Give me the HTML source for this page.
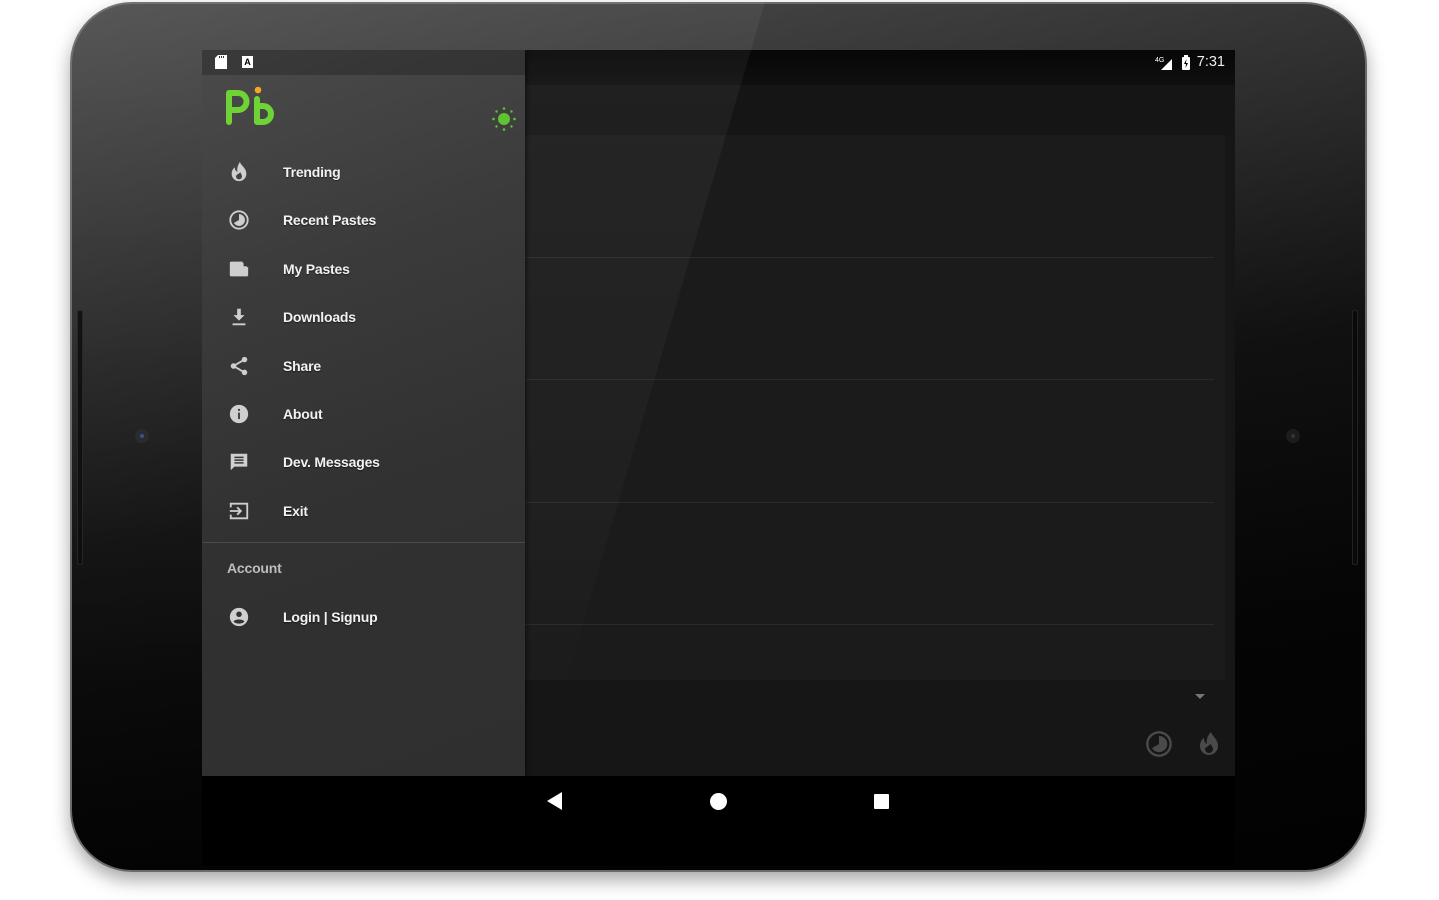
<!DOCTYPE html>
<html><head><meta charset="utf-8"><style>
*{margin:0;padding:0;box-sizing:border-box}
body{width:1439px;height:900px;background:#fff;position:relative;overflow:hidden;font-family:"Liberation Sans",Roboto,sans-serif}
.dev{position:absolute;left:70px;top:2px;width:1297px;height:870px;border-radius:62px;background:linear-gradient(170deg,#4e4e4e 0%,#303030 25%,#111 50%,#050505 75%,#020202 100%);border:2px solid #6a6a6a;box-shadow:0 8px 18px rgba(0,0,0,.35)}
.refl{position:absolute;left:70px;top:2px;width:1297px;height:870px;border-radius:62px;background:linear-gradient(rgba(255,255,255,.05),rgba(255,255,255,.02) 60%,rgba(255,255,255,0) 80%);clip-path:polygon(0 0,695px 0,440px 870px,0 870px);pointer-events:none;z-index:5}
.speaker{position:absolute;width:6px;height:255px;top:310px;background:#0a0a0a;border:1px solid #222;border-radius:2px}
.cam{position:absolute;width:14px;height:14px;border-radius:50%;background:#262626}
.cam i{position:absolute;left:5px;top:5px;width:4px;height:4px;border-radius:50%;background:#3a4a8a}
.screen{position:absolute;left:202px;top:50px;width:1033px;height:816px;background:#000;overflow:hidden}
.main{position:absolute;left:323px;top:0;width:710px;height:726px;background:#161616}
.msb{position:absolute;left:0;top:0;width:710px;height:35px;background:linear-gradient(#070707,#0f0f0f)}
.tb{position:absolute;left:0;top:35px;width:710px;height:50px;background:#151515}
.card{position:absolute;left:0;top:85px;width:700px;height:545px;background:#1b1b1b;border-radius:2px}
.card hr{position:absolute;left:0;width:689px;border:0;border-top:1px solid #2a2a2a}
.drawer{position:absolute;left:0;top:0;width:323px;height:726px;background:linear-gradient(160deg,#4b4b4b 0%,#3b3b3b 30%,#313131 60%,#2f2f2f 100%);box-shadow:2px 0 4px rgba(0,0,0,.4);z-index:6}
.dsb{height:25px;background:rgba(0,0,0,.22)}
.item{position:absolute;left:0;height:48px;width:323px;display:flex;align-items:center}
.item svg{position:absolute;left:26px;width:22px;height:22px}
.item span{position:absolute;left:81px;color:#f2f2f2;font-size:14px;font-weight:bold;letter-spacing:-0.2px;text-shadow:0 1px 1px rgba(0,0,0,.5)}
.nav{position:absolute;left:0;top:726px;width:1033px;height:90px;background:#000;z-index:7}
</style></head><body>
<div class="dev"></div>
<div class="speaker" style="left:77px"></div>
<div class="speaker" style="left:1352px"></div>
<div class="cam" style="left:135px;top:429px"><i></i></div>
<div class="cam" style="left:1286px;top:429px;background:#1c1c1c"><i style="background:#333"></i></div>
<div class="refl"></div>
<div class="screen">
 <div class="main">
  <div class="msb"></div>
  <div style="position:absolute;right:10px;top:4px;color:#eee;font-size:14.5px">7:31</div>
  <svg style="position:absolute;left:630px;top:5px" width="20" height="16"><text x="0" y="7" font-size="7" fill="#fff" font-family="Liberation Sans">4G</text><polygon points="6,15 17,4 17,15" fill="#fff"/></svg>
  <svg style="position:absolute;left:656px;top:5px" width="10" height="16"><rect x="1" y="2" width="8" height="13" rx="1" fill="#fff"/><rect x="3" y="0" width="4" height="2" fill="#fff"/><path d="M5.5 4 L3 9 H5 L4.5 13 L7 8 H5 Z" fill="#000"/></svg>
  <div class="tb"></div>
  <div class="card"><hr style="top:122px"><hr style="top:244px"><hr style="top:367px"><hr style="top:489px"></div>
  <svg style="position:absolute;left:670px;top:644px" width="10" height="6"><polygon points="0,0 10,0 5,5" fill="#777"/></svg>
  <svg style="position:absolute;left:620px;top:680px" width="28" height="28" viewBox="0 0 24 24"><circle cx="12" cy="12" r="10" fill="none" stroke="#4a4a4a" stroke-width="2"/><path d="M12 5a7 7 0 1 1-6 10.5L12 12Z" fill="#4a4a4a"/></svg>
  <svg style="position:absolute;left:672px;top:680px" width="24" height="28" viewBox="0 0 24 28"><path d="M14 2c1 4 7 7 7 14a9 9 0 0 1-18 0c0-4 2-7 4-8 0 3 1 5 3 6-1-5 1-9 4-12zm-2 21a4 4 0 0 0 4-4c0-2-2-3-2-5-3 2-6 4-6 5a4 4 0 0 0 4 4z" fill="#4a4a4a"/></svg>
 </div>
 <div class="drawer">
  <div class="dsb"></div>
  <svg style="position:absolute;left:13px;top:5px" width="12" height="14"><path d="M3 0H12V14H0V3Z" fill="#fff"/><rect x="4" y="1" width="1" height="2" fill="#333"/><rect x="6" y="1" width="1" height="2" fill="#333"/><rect x="8" y="1" width="1" height="2" fill="#333"/></svg>
  <div style="position:absolute;left:40px;top:6px;width:11px;height:12px;background:#fff;color:#000;font-size:9px;font-weight:bold;text-align:center;line-height:12px">A</div>
  <svg style="position:absolute;left:22px;top:36px" width="60" height="40" viewBox="0 0 60 40">
   <path d="M5 36V7h9a8.5 8.5 0 0 1 0 17H5" fill="none" stroke="#6fd335" stroke-width="6" stroke-linecap="round" stroke-linejoin="round"/>
   <path d="M33 13v23h6a8 8 0 0 0 0-16h-6" fill="none" stroke="#6fd335" stroke-width="6" stroke-linecap="round" stroke-linejoin="round"/>
   <circle cx="34" cy="4" r="3.3" fill="#f5a623"/>
  </svg>
  <svg style="position:absolute;left:289px;top:56px" width="26" height="26" viewBox="0 0 26 26"><circle cx="13" cy="13" r="6" fill="#5ec431"/><g fill="#5ec431"><circle cx="13" cy="2.5" r="1.3"/><circle cx="13" cy="23.5" r="1.3"/><circle cx="2.5" cy="13" r="1.3"/><circle cx="23.5" cy="13" r="1.3"/><circle cx="5.5" cy="5.5" r="1.2"/><circle cx="20.5" cy="5.5" r="1.2"/><circle cx="5.5" cy="20.5" r="1.2"/><circle cx="20.5" cy="20.5" r="1.2"/></g></svg>
  <div class="item" style="top:98px"><svg viewBox="0 0 24 24"><path d="M13 1c1 4 7 6.5 7 13a8 8 0 0 1-16 0c0-3.5 1.8-6 3.5-7 0 2.5 1 4.3 2.8 5C9.5 8 11 4 13 1zm-1 19a3.3 3.3 0 0 0 3.3-3.3c0-1.7-1.6-2.7-1.6-4.4-2.2 1.6-5 3.2-5 4.4A3.3 3.3 0 0 0 12 20z" fill="#cfcfcf"/></svg><span>Trending</span></div>
  <div class="item" style="top:146px"><svg viewBox="0 0 24 24"><circle cx="12" cy="12" r="9.5" fill="none" stroke="#cfcfcf" stroke-width="2"/><path d="M12 5.5a6.5 6.5 0 1 1-5.6 9.8L12 12Z" fill="#cfcfcf"/></svg><span>Recent Pastes</span></div>
  <div class="item" style="top:195px"><svg viewBox="0 0 24 24"><path d="M3.5 4H16l6 6v8.5Q22 20 20.5 20h-17Q2 20 2 18.5v-13Q2 4 3.5 4z" fill="#cfcfcf"/><path d="M16 4l6 6" stroke="#3a3a3a" stroke-width="1"/><path d="M17 4.5v4.5h4.5z" fill="#3a3a3a"/></svg><span>My Pastes</span></div>
  <div class="item" style="top:243px"><svg viewBox="0 0 24 24"><path d="M10 3h4v7h4l-6 6-6-6h4z M5 19h14v2H5z" fill="#cfcfcf"/></svg><span>Downloads</span></div>
  <div class="item" style="top:292px"><svg viewBox="0 0 24 24"><circle cx="18" cy="5" r="3" fill="#cfcfcf"/><circle cx="6" cy="12" r="3" fill="#cfcfcf"/><circle cx="18" cy="19" r="3" fill="#cfcfcf"/><path d="M6 12L18 5M6 12l12 7" stroke="#cfcfcf" stroke-width="2"/></svg><span>Share</span></div>
  <div class="item" style="top:340px"><svg viewBox="0 0 24 24"><circle cx="12" cy="12" r="10" fill="#cfcfcf"/><rect x="11" y="10.5" width="2" height="7" fill="#3a3a3a"/><circle cx="12" cy="7.5" r="1.2" fill="#3a3a3a"/></svg><span>About</span></div>
  <div class="item" style="top:388px"><svg viewBox="0 0 24 24"><path d="M3 3h18v14H7l-4 4z" fill="#cfcfcf"/><path d="M7 7h10M7 10h10M7 13h10" stroke="#363636" stroke-width="1.6"/></svg><span>Dev. Messages</span></div>
  <div class="item" style="top:437px"><svg viewBox="0 0 24 24"><path d="M3 8V4h18v16H3v-4" fill="none" stroke="#cfcfcf" stroke-width="2"/><path d="M2 12h11M10 8l4 4-4 4" fill="none" stroke="#cfcfcf" stroke-width="2"/></svg><span>Exit</span></div>
  <div style="position:absolute;left:0;top:492px;width:323px;border-top:1px solid #4a4a4a"></div>
  <div style="position:absolute;left:25px;top:510px;color:#bdbdbd;font-size:14px;font-weight:bold;letter-spacing:-0.2px">Account</div>
  <div class="item" style="top:543px"><svg viewBox="0 0 24 24"><circle cx="12" cy="12" r="10" fill="#cfcfcf"/><circle cx="12" cy="9" r="3" fill="#333"/><path d="M6 17c2-3 10-3 12 0-3 3-9 3-12 0z" fill="#333"/></svg><span>Login | Signup</span></div>
 </div>
 <div class="nav">
  <svg style="position:absolute;left:345px;top:16px" width="16" height="18"><polygon points="0,9 15,0 15,18" fill="#fff"/></svg>
  <div style="position:absolute;left:508px;top:17px;width:17px;height:17px;border-radius:50%;background:#fff"></div>
  <div style="position:absolute;left:672px;top:18px;width:15px;height:15px;background:#fff;border-radius:1px"></div>
 </div>
</div>
</body></html>
